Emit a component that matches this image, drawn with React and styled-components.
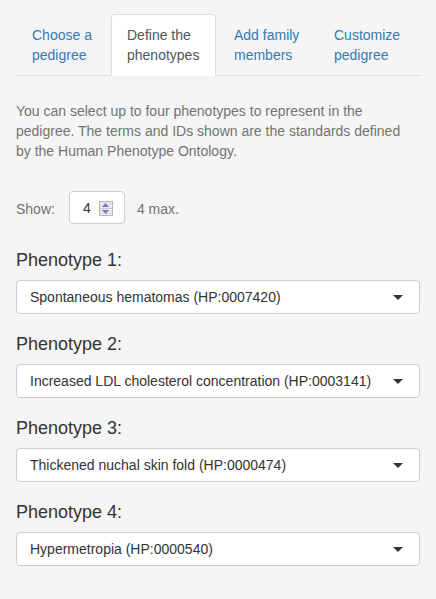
import React from 'react'
import styled, { createGlobalStyle } from 'styled-components'

const tabs = [
    { label: 'Choose a pedigree', width: 93 },
    { label: 'Define the phenotypes', width: 105, active: true },
    { label: 'Add family members', width: 98 },
    { label: 'Customize pedigree', width: 97 },
]

const phenotypes = [
    'Spontaneous hematomas (HP:0007420)',
    'Increased LDL cholesterol concentration (HP:0003141)',
    'Thickened nuchal skin fold (HP:0000474)',
    'Hypermetropia (HP:0000540)',
]

export default () => {
    return (
        <>
            <GlobalStyle />
            <Panel>
                <TabBar>
                    {tabs.map((t) => (
                        <Tab key={t.label} $width={t.width} $active={t.active}>{t.label}</Tab>
                    ))}
                </TabBar>
                <Help>
                    You can select up to four phenotypes to represent in the pedigree. The terms and
                    IDs shown are the standards defined by the Human Phenotype Ontology.
                </Help>
                <ShowRow>
                    <ShowLabel>Show:</ShowLabel>
                    <NumberBox>
                        <span>4</span>
                        <Spinner>
                            <SpinHalf>
                                <svg width="7" height="4" viewBox="0 0 7 4"><path d="M0 4 L3.5 0 L7 4 Z" fill="#6b7fb8" /></svg>
                            </SpinHalf>
                            <SpinHalf>
                                <svg width="7" height="4" viewBox="0 0 7 4"><path d="M0 0 L3.5 4 L7 0 Z" fill="#6b7fb8" /></svg>
                            </SpinHalf>
                        </Spinner>
                    </NumberBox>
                    <ShowLabel $gap={12}>4 max.</ShowLabel>
                </ShowRow>
                {phenotypes.map((p, i) => (
                    <Group key={p}>
                        <GroupLabel>Phenotype {i + 1}:</GroupLabel>
                        <Select>
                            <span>{p}</span>
                            <Caret />
                        </Select>
                    </Group>
                ))}
            </Panel>
        </>
    )
}

const GlobalStyle = createGlobalStyle`
    html, body {
        margin: 0;
        background: #f5f5f5;
        font-family: "Liberation Sans", Arial, sans-serif;
        font-size: 14px;
        color: #333333;
    }
`
const Panel = styled.div`
    padding: 14px 16px 20px;
`
const TabBar = styled.div`
    display: flex;
    gap: 2px;
    border-bottom: 1px solid #dddddd;
`
const Tab = styled.div`
    box-sizing: border-box;
    width: ${(p) => p.$width}px;
    padding: 10px 15px;
    line-height: 20px;
    margin-bottom: -1px;
    border: 1px solid ${(p) => (p.$active ? '#dddddd' : 'transparent')};
    border-bottom-color: transparent;
    border-radius: 4px 4px 0 0;
    background: ${(p) => (p.$active ? '#ffffff' : 'transparent')};
    color: ${(p) => (p.$active ? '#555555' : '#337ab7')};
`
const Help = styled.p`
    margin: 25px 0 0;
    padding-right: 12px;
    line-height: 20px;
    color: #737373;
`
const ShowRow = styled.div`
    display: flex;
    align-items: center;
    margin-top: 30px;
`
const ShowLabel = styled.span`
    color: #737373;
    font-size: 14px;
    padding-top: 2px;
    margin-left: ${(p) => p.$gap || 0}px;
`
const NumberBox = styled.div`
    box-sizing: border-box;
    width: 56px;
    height: 33px;
    margin-left: 14px;
    display: flex;
    align-items: center;
    gap: 8px;
    padding-left: 13px;
    border: 1px solid #cccccc;
    border-radius: 4px;
    background: #ffffff;
    color: #333333;
`
const Spinner = styled.div`
    display: flex;
    flex-direction: column;
    border: 1px solid #b8b8b8;
    margin-top: 1px;
`
const SpinHalf = styled.div`
    width: 12px;
    height: 6px;
    display: flex;
    align-items: center;
    justify-content: center;
    background: #e8e8e8;
    & + & {
        border-top: 1px solid #c8c8c8;
    }
`
const Group = styled.div`
    margin-top: 26px;
    & + & {
        margin-top: 20px;
    }
`
const GroupLabel = styled.div`
    font-size: 18px;
    line-height: 20px;
    color: #333333;
    margin-bottom: 10px;
`
const Select = styled.div`
    box-sizing: border-box;
    height: 34px;
    display: flex;
    align-items: center;
    justify-content: space-between;
    padding: 0 16px 0 13px;
    border: 1px solid #cccccc;
    border-radius: 4px;
    background: #ffffff;
    color: #333333;
`
const Caret = styled.span`
    width: 0;
    height: 0;
    border-left: 5px solid transparent;
    border-right: 5px solid transparent;
    border-top: 5px solid #333333;
`
